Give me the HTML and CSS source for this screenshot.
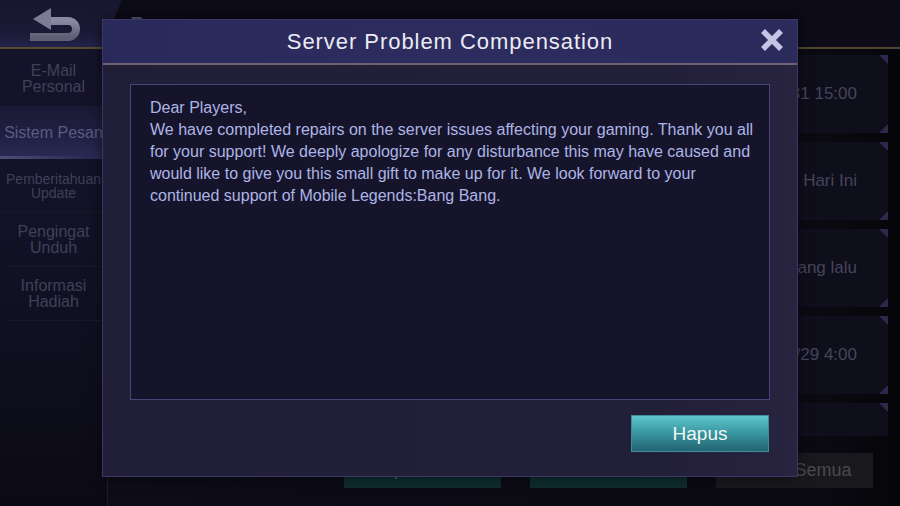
FILE: index.html
```html
<!DOCTYPE html>
<html lang="id">
<head>
<meta charset="utf-8">
<title>Pesan</title>
<link rel="stylesheet" href="styles.css">
</head>
<body>
<div class="app">
  <header class="topbar">
    <div class="back">
      <svg width="60" height="40" viewBox="0 0 60 40" class="back-icon">
        <defs>
          <linearGradient id="ag" x1="0" y1="0" x2="0" y2="1">
            <stop offset="0" stop-color="#8a8aa2"/>
            <stop offset="1" stop-color="#5e5e74"/>
          </linearGradient>
        </defs>
        <path d="M28 17 H48 A8 8 0 0 1 48 33 H10" fill="none" stroke="url(#ag)" stroke-width="8"/>
        <polygon points="13,15 31,4 31,26" fill="#7c7c94"/>
      </svg>
    </div>
    <div class="page-title">Pesan</div>
  </header>
  <div class="goldline"></div>
  <div class="content">
    <nav class="sidebar">
      <div class="nav-item first">E-Mail<br>Personal</div>
      <div class="nav-item active">Sistem Pesan</div>
      <div class="nav-item small">Pemberitahuan<br>Update</div>
      <div class="nav-item">Pengingat<br>Unduh</div>
      <div class="nav-item">Informasi<br>Hadiah</div>
    </nav>
    <main class="main">
      <div class="list">
        <div class="card"><span class="card-title">Server Problem Compensation</span><span class="card-date">2019/07/31 15:00</span></div>
        <div class="card"><span class="card-title">Hadiah Harian</span><span class="card-date">Hari Ini</span></div>
        <div class="card"><span class="card-title">Pemberitahuan Sistem</span><span class="card-date">2 hari yang lalu</span></div>
        <div class="card"><span class="card-title">Hadiah Event</span><span class="card-date">2019/07/29 4:00</span></div>
        <div class="card"></div>
      </div>
      <div class="actions">
        <button class="btn teal">Hapus Dibaca</button>
        <button class="btn teal">Telah Dibaca</button>
        <button class="btn gray">Terima Semua</button>
      </div>
    </main>
  </div>

  <section class="dialog">
    <div class="dialog-head">
      <h1 class="dialog-title">Server Problem Compensation</h1>
      <svg class="close" width="26" height="26" viewBox="0 0 26 26">
        <path d="M4 4 L22 22 M22 4 L4 22" stroke="#c4c5e6" stroke-width="5.5" stroke-linecap="butt"/>
      </svg>
    </div>
    <div class="dialog-body">
      <div class="message">Dear Players,<br>We have completed repairs on the server issues affecting your gaming. Thank you all for your support! We deeply apologize for any disturbance this may have caused and would like to give you this small gift to make up for it. We look forward to your continued support of Mobile Legends:Bang Bang.</div>
      <div class="dialog-foot">
        <button class="hapus">Hapus</button>
      </div>
    </div>
  </section>
</div>
</body>
</html>
```
FILE: styles.css
```css
* { box-sizing: border-box; }
html, body { margin: 0; padding: 0; }
body {
  width: 900px;
  height: 506px;
  overflow: hidden;
  background: #0b0a13;
  font-family: "Liberation Sans", Arial, sans-serif;
}
.app {
  position: relative;
  width: 900px;
  height: 506px;
  display: flex;
  flex-direction: column;
}
.topbar {
  height: 47px;
  display: flex;
  background: #0c0b16;
}
.back {
  width: 122px;
  height: 47px;
  background: linear-gradient(180deg, #181730 0%, #1b1a36 70%, #23224a 100%);
  clip-path: polygon(0 0, 122px 0, 102px 100%, 0 100%);
  padding: 4px 0 0 20px;
}
.back-icon { display: block; }
.page-title {
  padding: 12px 0 0 8px;
  color: #5b5b75;
  font-size: 22px;
}
.goldline {
  height: 2px;
  background: linear-gradient(90deg, #5a4a30, #4f4430);
}
.content {
  flex: 1;
  display: flex;
  min-height: 0;
}
.sidebar {
  width: 108px;
  flex: none;
  display: flex;
  flex-direction: column;
  padding-top: 2px;
  background: linear-gradient(180deg, #14132a 0%, #121124 50%, #0b0a14 100%);
  border-right: 1px solid #1c1b2e;
}
.nav-item {
  height: 54px;
  display: flex;
  align-items: center;
  justify-content: center;
  text-align: center;
  color: #404058;
  font-size: 16px;
  line-height: 16px;
  margin: 0 6px;
  border-bottom: 1px solid #1a1929;
}
.nav-item.first { height: 55px; border-bottom: none; }
.nav-item.small { font-size: 14px; line-height: 14px; margin: 0; }
.nav-item.active {
  margin: 0;
  height: 53px;
  color: #585c7e;
  white-space: nowrap;
  border-bottom: none;
  background:
    linear-gradient(90deg, rgba(130,130,180,0.4), rgba(80,80,140,0) 80%) bottom / 100% 3px no-repeat,
    linear-gradient(180deg, #1a1934 0%, #212045 60%, #2b2a55 100%);
}
.main {
  flex: 1;
  display: flex;
  flex-direction: column;
  padding: 6px 12px 0 12px;
  background: linear-gradient(90deg, #0d0c17, #0b0a12 90%, #060509);
}
.list {
  height: 381px;
  overflow: hidden;
  display: flex;
  flex-direction: column;
  gap: 9px;
}
.card {
  position: relative;
  flex: none;
  height: 78px;
  display: flex;
  align-items: center;
  justify-content: space-between;
  padding: 0 31px 0 20px;
  background: #0f0e1b;
  border-radius: 4px 12px 12px 4px;
}
.card::before, .card::after {
  content: "";
  position: absolute;
  right: 0;
  width: 0;
  height: 0;
  border-style: solid;
}
.card::before { top: 0; border-width: 0 9px 9px 0; border-color: transparent #2c2a4c transparent transparent; }
.card::after { bottom: 0; border-width: 0 0 9px 9px; border-color: transparent transparent #2c2a4c transparent; }
.card-title { color: #5a5a72; font-size: 18px; }
.card-date { color: #45455d; font-size: 17px; }
.actions {
  margin-top: 17px;
  height: 35px;
  display: flex;
  justify-content: flex-end;
  gap: 29px;
  padding-right: 15px;
}
.btn {
  width: 157px;
  height: 35px;
  border: none;
  font-family: inherit;
  font-size: 15px;
}
.btn.teal { background: #0f2b2e; color: #2e6e6f; }
.btn.gray { background: #19181c; color: #4a4a4e; font-size: 18px; padding-left: 4px; }

.dialog {
  position: absolute;
  left: 102px;
  top: 19px;
  width: 696px;
  height: 458px;
  border: 1px solid #3a3768;
  background: linear-gradient(90deg, #211e37 0%, #221f39 80%, #28243f 100%);
  display: flex;
  flex-direction: column;
  box-shadow: 0 0 12px rgba(0,0,0,0.5);
}
.dialog-head {
  position: relative;
  height: 45px;
  flex: none;
  background: linear-gradient(90deg, #29295a 0%, #2c2c5f 50%, #2a2a5b 100%);
  border-bottom: 2px solid #6e6272;
  display: flex;
  align-items: center;
  justify-content: center;
}
.dialog-title {
  margin: 0;
  font-weight: normal;
  font-size: 22px;
  letter-spacing: 0.95px;
  color: #ebeaf4;
}
.close {
  position: absolute;
  right: 12px;
  top: 7px;
}
.dialog-body {
  flex: 1;
  display: flex;
  flex-direction: column;
  padding: 19px 27px 24px 27px;
}
.message {
  height: 316px;
  border: 1px solid #48447c;
  background: #15142a;
  padding: 12px 4px 0 19px;
  color: #adb5e6;
  font-size: 16px;
  line-height: 22px;
}
.dialog-foot {
  margin-top: 15px;
  display: flex;
  justify-content: flex-end;
  padding-right: 1px;
}
.hapus {
  width: 138px;
  height: 37px;
  border: 1px solid #3c8f9b;
  background: linear-gradient(180deg, #5ec5cc 0%, #3c9aa4 45%, #2a7682 80%, #246673 100%);
  color: #eef8f8;
  font-family: inherit;
  font-size: 19px;
}
```
